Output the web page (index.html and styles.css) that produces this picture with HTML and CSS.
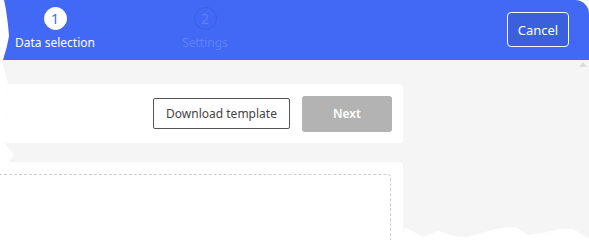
FILE: index.html
```html
<!DOCTYPE html>
<html lang="en">
<head>
    <meta charset="UTF-8">
    <meta name="viewport" content="width=device-width, initial-scale=1.0">
    <title>Import data</title>

    <link rel="stylesheet" href="styles.css">
</head>
<body>
<div class="frame">
    <header class="topbar">
        <ol class="steps">
            <li class="step active">
                <span class="num">1</span>
                <span class="label">Data selection</span>
            </li>
            <li class="step">
                <span class="num">2</span>
                <span class="label">Settings</span>
            </li>
        </ol>
        <button class="cancel">Cancel</button>
    </header>

    <div class="page">
        <main class="content">
            <section class="card actions">
                <button class="btn-outline">Download template</button>
                <button class="btn-next" disabled>Next</button>
            </section>
            <section class="card upload">
                <div class="dropzone"></div>
            </section>
        </main>
        <span class="scroll-up"></span>
    </div>
</div>
</body>
</html>
```

FILE: styles.css
```css
body {
    margin: 0;
    background-color: #fff;
    font-family: "Noto Sans", "Open Sans", sans-serif;
}

.frame {
    position: relative;
    width: 589px;
    height: 240px;
    overflow: hidden;
    /* torn screenshot edges */
    clip-path: polygon(4px 0, 6px 10px, 8px 25px, 9px 36px, 7px 46px, 5px 53px, 3px 60px, 2px 62px,
        8px 83px, 8px 84px, 5px 143px, 14px 156px, 8px 162px, 0 170px, 0 240px, 400px 240px,
        405px 227px, 423px 237px, 438px 231px, 453px 236px, 468px 237px, 485px 232px, 500px 228px,
        515px 227px, 528px 235px, 543px 233px, 560px 229px, 573px 229px, 588px 238px, 589px 238px, 589px 0);
}

.topbar {
    display: flex;
    justify-content: space-between;
    align-items: flex-start;
    height: 60px;
    padding-right: 20px;
    background-color: #4169f5;
    border-top-right-radius: 14px;
}

.steps {
    display: flex;
    gap: 40px;
    margin: 0;
    padding: 0;
    list-style: none;
}

.step {
    display: flex;
    flex-direction: column;
    align-items: center;
    width: 110px;
    padding-top: 7px;
}

.num {
    width: 23px;
    height: 23px;
    box-sizing: border-box;
    border: 1px solid #3a5fe2;
    border-radius: 50%;
    font-size: 14px;
    line-height: 21px;
    text-align: center;
    color: #5f80f6;
}

.label {
    margin-top: 4px;
    font-size: 12px;
    line-height: 17px;
    color: #5f80f6;
}

.step.active .num {
    background-color: #fff;
    border-color: #fff;
    color: #4169f5;
}

.step.active .label {
    color: #fff;
}

.cancel {
    margin-top: 12px;
    width: 62px;
    height: 35px;
    border: 1px solid #fff;
    border-radius: 4px;
    background-color: #3b5fdd;
    color: #fff;
    font-family: inherit;
    font-size: 13px;
    cursor: pointer;
}

.page {
    height: 180px;
    background-color: #f5f5f5;
}

.content {
    width: 423px;
    margin-left: -20px;
    padding-top: 24px;
}

.card {
    background-color: #fff;
    border-radius: 4px;
}

.actions {
    display: flex;
    justify-content: flex-end;
    align-items: center;
    gap: 12px;
    height: 59px;
    padding-right: 11px;
}

.btn-outline {
    width: 137px;
    height: 31px;
    border: 1px solid #555;
    border-radius: 2px;
    background-color: #fff;
    color: #444;
    font-family: inherit;
    font-size: 12px;
    cursor: pointer;
}

.btn-next {
    width: 90px;
    height: 36px;
    border: none;
    border-radius: 3px;
    background-color: #b3b3b3;
    color: #fff;
    font-family: inherit;
    font-size: 12px;
    font-weight: 600;
}

.upload {
    margin-top: 19px;
    padding: 12px 12px 0 0;
}

.dropzone {
    height: 200px;
    border: 1px dashed #ccc;
    border-radius: 4px;
}

.scroll-up {
    position: absolute;
    top: 62px;
    right: 2px;
    border-left: 4px solid transparent;
    border-right: 4px solid transparent;
    border-bottom: 5px solid #dcdcdc;
}
```
